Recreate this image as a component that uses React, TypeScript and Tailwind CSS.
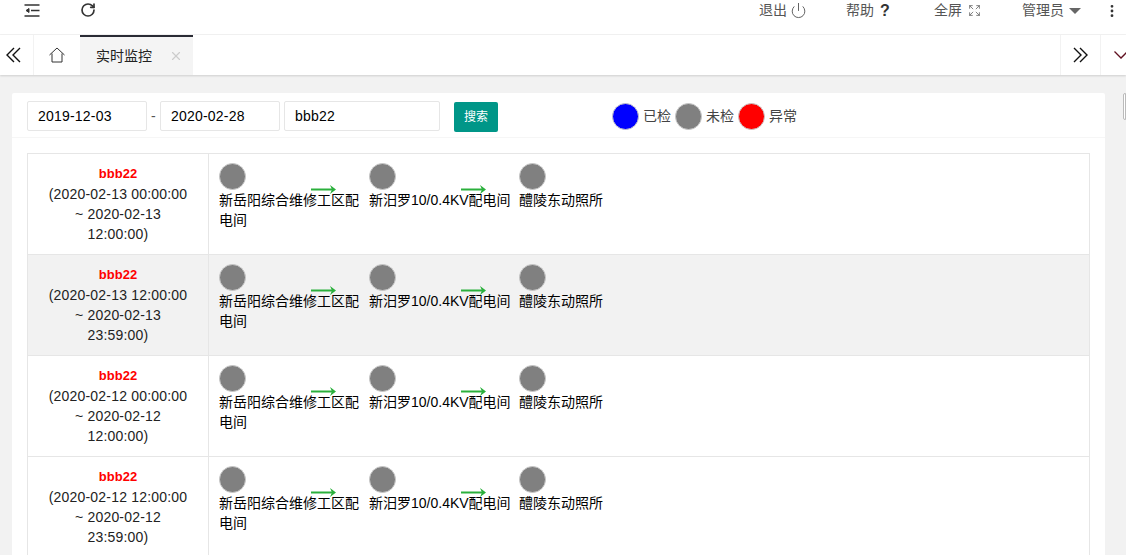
import { EllipsisVertical, Expand, Power, RotateCw, X } from "lucide-react";

const rows = [
  { start: "2020-02-13 00:00:00", end: "2020-02-13", time: "12:00:00", shaded: false },
  { start: "2020-02-13 12:00:00", end: "2020-02-13", time: "23:59:00", shaded: true },
  { start: "2020-02-12 00:00:00", end: "2020-02-12", time: "12:00:00", shaded: false },
  { start: "2020-02-12 12:00:00", end: "2020-02-12", time: "23:59:00", shaded: false },
];

const stations = ["新岳阳综合维修工区配电间", "新汨罗10/0.4KV配电间", "醴陵东动照所"];

function Arrow() {
  return (
    <svg className="absolute left-[92px] top-[21px]" width="26" height="11" viewBox="0 0 26 11">
      <path d="M0 5.5h23" stroke="#2bb03c" strokeWidth="2" />
      <path d="M19 1l6 4.5-6 4.5 2-4.5z" fill="#2bb03c" />
    </svg>
  );
}

function Dot({ color }: { color: string }) {
  return <span className={`block w-[27px] h-[27px] rounded-full border border-[#c8c8c8] ${color}`} />;
}

function MenuIcon() {
  return (
    <svg width="16" height="13" viewBox="0 0 16 13" fill="none" stroke="#333" strokeWidth="1.5">
      <path d="M0.5 1h15M7 6.5h8.5M0.5 12h15" />
      <path d="M5 4.5L2 6.5l3 2z" fill="#333" strokeWidth="1" />
    </svg>
  );
}

function DoubleChevron({ flip }: { flip?: boolean }) {
  return (
    <svg width="15" height="16" viewBox="0 0 15 16" fill="none" stroke="#111" strokeWidth="1.4" className={flip ? "rotate-180" : ""}>
      <path d="M8 1L1 8l7 7M14 1L7 8l7 7" />
    </svg>
  );
}

function HomeIcon() {
  return (
    <svg width="16" height="16" viewBox="0 0 16 16" fill="none" stroke="#333" strokeWidth="1">
      <path d="M0.5 8L8 1l7.5 7M3 6.5v8.5h10V6.5" />
    </svg>
  );
}

function Caret() {
  return <span className="ml-[5px] w-0 h-0 border-x-[6px] border-x-transparent border-t-[6px] border-t-[#666]" />;
}

export default function App() {
  return (
    <div className="h-[555px] w-[1126px] overflow-hidden bg-[#f2f2f2] text-[14px] text-[#333] font-['Liberation_Sans','Noto_Sans_CJK_SC',sans-serif]">
      <div className="h-[35px] bg-white border-b border-[#f2f2f2] flex items-start">
        <div className="ml-[24px] mt-[4px] h-[13px] flex"><MenuIcon /></div>
        <RotateCw className="ml-[40px] mt-[2px] text-[#333]" size={16} strokeWidth={2.5} />
        <div className="ml-auto flex items-center h-[21px] text-[#555]">
          <span>退出</span>
          <Power className="ml-[3px] text-[#555]" size={17} strokeWidth={1.3} />
          <span className="ml-[39px]">帮助</span>
          <span className="ml-[4px] w-[14px] text-center text-[16px] font-bold text-[#333]">?</span>
          <span className="ml-[42px]">全屏</span>
          <Expand className="ml-[6px] text-[#666]" size={13} strokeWidth={1.5} />
          <span className="ml-[41px]">管理员</span>
          <Caret />
          <EllipsisVertical className="ml-[23px] mr-[6px] text-[#333]" size={16} strokeWidth={2.2} />
        </div>
      </div>

      <div className="h-[40px] bg-white shadow-[0_1px_2px_rgba(0,0,0,0.15)] flex items-stretch">
        <div className="w-[34px] border-r border-[#f2f2f2] flex items-center pl-[6px]">
          <DoubleChevron />
        </div>
        <div className="w-[46px] flex items-center pl-[15px]">
          <HomeIcon />
        </div>
        <div className="w-[113px] bg-[#f4f4f4] border-t-2 border-[#292b34] flex items-center pl-[16px] text-[#222]">
          <span>实时监控</span>
          <X size={14} strokeWidth={2} className="ml-[17px] text-[#ccc]" />
        </div>
        <div className="ml-auto w-[41px] border-x border-[#f2f2f2] flex items-center justify-center">
          <DoubleChevron flip />
        </div>
        <div className="w-[25px] flex items-center pl-[13px] overflow-hidden">
          <svg width="14" height="8" viewBox="0 0 14 8" fill="none" stroke="#601020" strokeWidth="1.3" className="shrink-0">
            <path d="M0.5 0.5L7 7l6.5-6.5" />
          </svg>
        </div>
      </div>

      <div className="flex items-start pt-[18px] pl-[12px]">
        <div className="w-[1094px] bg-white rounded-[2px]">
          <div className="h-[45px] border-b border-[#f6f6f6] flex items-start pt-[8px] pl-[15px]">
            <div className="w-[120px] h-[30px] border border-[#e6e6e6] rounded-[2px] pl-[10px] leading-[28px] tracking-[0.2px] text-black">2019-12-03</div>
            <span className="w-[9px] ml-[4px] leading-[30px] text-[#555]">-</span>
            <div className="w-[120px] h-[30px] border border-[#e6e6e6] rounded-[2px] pl-[10px] leading-[28px] tracking-[0.2px] text-black">2020-02-28</div>
            <div className="ml-[4px] w-[156px] h-[30px] border border-[#e6e6e6] rounded-[2px] pl-[10px] leading-[28px] tracking-[0.2px] text-black">bbb22</div>
            <div className="ml-[14px] mt-[1px] w-[44px] h-[30px] bg-[#009688] rounded-[2px] text-white text-[12px] leading-[30px] text-center">搜索</div>
            <div className="ml-[114px] h-[30px] flex items-center gap-[4px] text-[#444]">
              <Dot color="bg-[#0000ff]" />
              <span>已检</span>
              <Dot color="bg-[#808080]" />
              <span>未检</span>
              <Dot color="bg-[#ff0000]" />
              <span>异常</span>
            </div>
          </div>

          <div className="mt-[15px] mx-[15px] border-t border-l border-r border-[#e6e6e6]">
            {rows.map((row) => (
              <div
                key={row.start}
                className={`flex h-[101px] border-b border-[#e6e6e6] ${row.shaded ? "bg-[#f2f2f2]" : ""}`}
              >
                <div className="w-[181px] border-r border-[#e6e6e6] pt-[10px] px-[18px] text-center leading-[20px] tracking-[0.2px] text-[#222]">
                  <div className="font-bold text-[13px] tracking-normal text-[#ff0000]">bbb22</div>
                  <div>({row.start} ~ {row.end} {row.time})</div>
                </div>
                <div className="flex pl-[10px] pt-[9px]">
                  {stations.map((name, i) => (
                    <div key={name} className="relative w-[150px] pr-[8px] text-black">
                      <Dot color="bg-[#808080]" />
                      <div className="leading-[20px]">{name}</div>
                      {i < 2 && <Arrow />}
                    </div>
                  ))}
                </div>
              </div>
            ))}
          </div>
        </div>
        <div className="ml-[18px] w-[3px] h-[27px] bg-white border border-[#bbb] rounded-l-[2px]" />
      </div>
    </div>
  );
}
